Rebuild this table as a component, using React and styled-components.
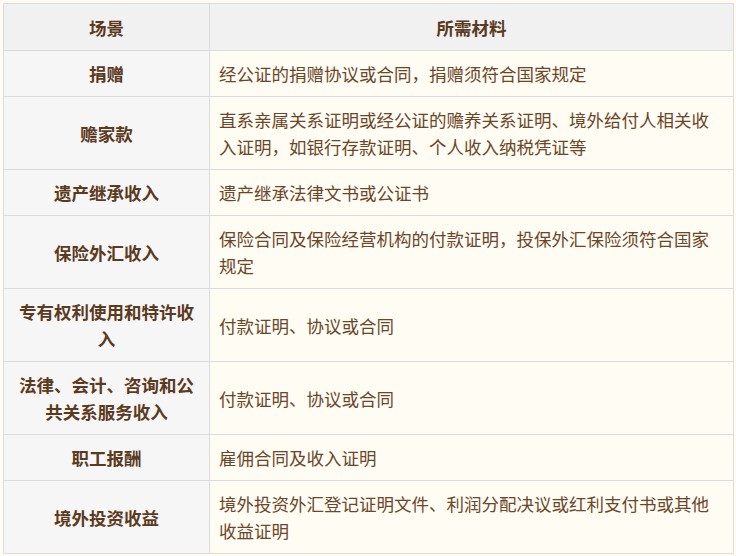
import React from 'react';
import styled, { createGlobalStyle } from 'styled-components';

const rows = [
  { scene: '捐赠', docs: '经公证的捐赠协议或合同，捐赠须符合国家规定' },
  {
    scene: '赡家款',
    docs: '直系亲属关系证明或经公证的赡养关系证明、境外给付人相关收入证明，如银行存款证明、个人收入纳税凭证等',
  },
  { scene: '遗产继承收入', docs: '遗产继承法律文书或公证书' },
  { scene: '保险外汇收入', docs: '保险合同及保险经营机构的付款证明，投保外汇保险须符合国家规定' },
  { scene: '专有权利使用和特许收入', docs: '付款证明、协议或合同' },
  { scene: '法律、会计、咨询和公共关系服务收入', docs: '付款证明、协议或合同' },
  { scene: '职工报酬', docs: '雇佣合同及收入证明' },
  { scene: '境外投资收益', docs: '境外投资外汇登记证明文件、利润分配决议或红利支付书或其他收益证明' },
];

const GlobalStyle = createGlobalStyle`
  html, body {
    margin: 0;
    background: #fffcf4;
  }
  body {
    padding: 3px 2px 3px 3px;
    font-family: "Microsoft YaHei", "Noto Sans CJK SC", sans-serif;
  }
`;

const Table = styled.table`
  width: 731px;
  border-collapse: collapse;
  table-layout: fixed;
  font-size: 17.5px;
  line-height: 27px;
  color: #6b4628;
`;

const HeadCell = styled.th`
  background: #f1f1f1;
  border: 1px solid #dcdcdc;
  padding: 10px 10px 9px;
  font-weight: bold;
  color: #5b3a1e;
  text-align: center;
  width: ${(p) => (p.narrow ? '185px' : 'auto')};
`;

const SceneCell = styled.td`
  background: #f6f6f6;
  border: 1px solid #dcdcdc;
  padding: 9px 10px;
  font-weight: bold;
  color: #5b3a1e;
  text-align: center;
`;

const DocCell = styled.td`
  background: #fffcf4;
  border: 1px solid #dcdcdc;
  padding: 9px 10px 9px 9px;
  text-align: left;
`;

export default function App() {
  return (
    <>
      <GlobalStyle />
      <Table>
        <thead>
          <tr>
            <HeadCell narrow>场景</HeadCell>
            <HeadCell>所需材料</HeadCell>
          </tr>
        </thead>
        <tbody>
          {rows.map((r) => (
            <tr key={r.scene}>
              <SceneCell>{r.scene}</SceneCell>
              <DocCell>{r.docs}</DocCell>
            </tr>
          ))}
        </tbody>
      </Table>
    </>
  );
}
